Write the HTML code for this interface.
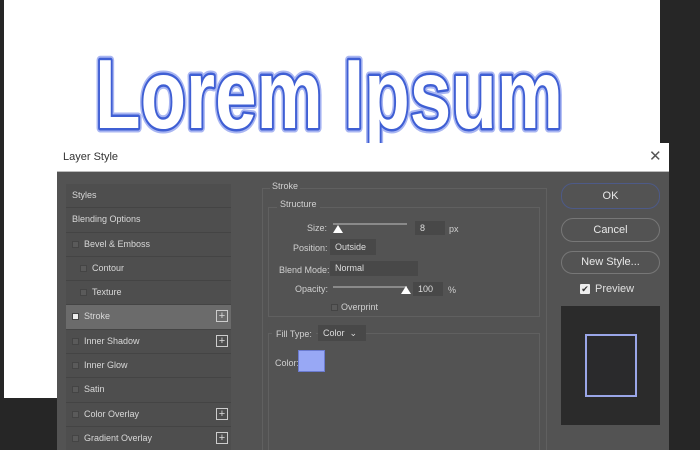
<!DOCTYPE html>
<html><head><style>
*{margin:0;padding:0;box-sizing:border-box}
html,body{width:700px;height:450px;overflow:hidden}
body{background:#262626;position:relative;font-family:"Liberation Sans",sans-serif;}
.abs{position:absolute}
#canvas{left:4px;top:0;width:656px;height:398px;background:#fff}
#dlg{left:57px;top:143px;width:612px;height:307px;background:#535353;overflow:hidden}
#title{left:0;top:0;width:612px;height:29px;background:#fff;border-bottom:1px solid #bbb}
#title span{position:absolute;left:6px;top:8px;font-size:11px;color:#333}
#title b{position:absolute;left:592px;top:4px;font-size:15px;font-weight:normal;color:#555}
.list{left:9px;top:41px;width:165px}
.row{height:24.3px;background:#4e4e4e;border-bottom:1px solid #444;color:#d8d8d8;font-size:9px;line-height:23px;padding-left:6px;position:relative}
.row.sel{background:#6b6b6b}
.cb{display:inline-block;width:7px;height:7px;border:1px solid #444;background:#5a5a5a;margin-right:5px;vertical-align:-1px}
.plus{position:absolute;right:3px;top:5px;width:12px;height:12px;border:1px solid #ccc;color:#ddd;font-size:11px;line-height:10px;text-align:center}
.lbl{color:#d0d0d0;font-size:9px;position:absolute}
.box{border:1px solid #606060;position:absolute}
.field{background:#484848;position:absolute;color:#ddd;font-size:9px;line-height:17px;padding-left:5px}
.btn{position:absolute;left:504px;width:99px;border:1px solid #777;border-radius:12px;color:#e8e8e8;font-size:11px;text-align:center}
.track{position:absolute;height:2px;background:#8a8a8a}
.thumb{position:absolute;width:0;height:0;border-left:5px solid transparent;border-right:5px solid transparent;border-bottom:8px solid #fff}
</style></head><body>
<div id="canvas" class="abs"></div>
<svg class="abs" style="left:0;top:0" width="700" height="160">
 <text x="95" y="128" textLength="468" lengthAdjust="spacingAndGlyphs" font-family="Liberation Sans, DejaVu Sans, sans-serif" font-weight="bold" font-size="98" fill="#fff" stroke="#a9b6f2" stroke-width="9" stroke-linejoin="round">Lorem Ipsum</text>
 <text x="95" y="128" textLength="468" lengthAdjust="spacingAndGlyphs" font-family="Liberation Sans, DejaVu Sans, sans-serif" font-weight="bold" font-size="98" fill="#fff" stroke="#3f5fd4" stroke-width="5" stroke-linejoin="round">Lorem Ipsum</text>
 <text x="95" y="128" textLength="468" lengthAdjust="spacingAndGlyphs" font-family="Liberation Sans, DejaVu Sans, sans-serif" font-weight="bold" font-size="98" fill="#fff">Lorem Ipsum</text>
</svg>
<div id="dlg" class="abs">
 <div id="title" class="abs"><span>Layer Style</span><b>✕</b></div>
 <div class="list abs">
  <div class="row">Styles</div>
  <div class="row">Blending Options</div>
  <div class="row"><span class="cb"></span>Bevel &amp; Emboss</div>
  <div class="row" style="padding-left:14px"><span class="cb"></span>Contour</div>
  <div class="row" style="padding-left:14px"><span class="cb"></span>Texture</div>
  <div class="row sel"><span class="cb" style="background:#eee"></span>Stroke<span class="plus">+</span></div>
  <div class="row"><span class="cb"></span>Inner Shadow<span class="plus">+</span></div>
  <div class="row"><span class="cb"></span>Inner Glow</div>
  <div class="row"><span class="cb"></span>Satin</div>
  <div class="row"><span class="cb"></span>Color Overlay<span class="plus">+</span></div>
  <div class="row"><span class="cb"></span>Gradient Overlay<span class="plus">+</span></div>
 </div>
 <div class="box" style="left:205px;top:45px;width:285px;height:270px"></div>
 <div class="lbl" style="left:213px;top:38px;background:#535353;padding:0 2px">Stroke</div>
 <div class="box" style="left:211px;top:64px;width:272px;height:110px"></div>
 <div class="lbl" style="left:220px;top:56px;background:#535353;padding:0 3px">Structure</div>
 <div class="lbl" style="left:250px;top:80px">Size:</div>
 <div class="track" style="left:276px;top:80px;width:74px"></div>
 <div class="thumb" style="left:276px;top:82px"></div>
 <div class="field" style="left:358px;top:78px;width:30px;height:14px;line-height:14px">8</div>
 <div class="lbl" style="left:392px;top:81px">px</div>
 <div class="lbl" style="left:236px;top:100px">Position:</div>
 <div class="field" style="left:273px;top:96px;width:46px;height:16px;line-height:16px">Outside ⌄</div>
 <div class="lbl" style="left:222px;top:122px">Blend Mode:</div>
 <div class="field" style="left:273px;top:118px;width:88px;height:15px;line-height:15px">Normal</div>
 <div class="lbl" style="left:238px;top:141px">Opacity:</div>
 <div class="track" style="left:276px;top:143px;width:74px"></div>
 <div class="thumb" style="left:344px;top:143px"></div>
 <div class="field" style="left:356px;top:139px;width:30px;height:14px;line-height:14px">100</div>
 <div class="lbl" style="left:391px;top:142px">%</div>
 <div class="lbl" style="left:274px;top:159px"><span class="cb" style="margin-right:3px"></span>Overprint</div>
 <div class="box" style="left:211px;top:190px;width:272px;height:130px"></div>
 <div class="lbl" style="left:215px;top:184px;background:#535353;padding:0 4px;line-height:14px">Fill Type:</div>
 <div class="field" style="left:261px;top:182px;width:48px;height:16px;line-height:16px">Color &nbsp;⌄</div>
 <div class="lbl" style="left:218px;top:215px">Color:</div>
 <div class="abs" style="left:241px;top:207px;width:27px;height:22px;background:#98a8f5;border:1px solid #6b7bd0"></div>
 <div class="btn" style="top:40px;height:26px;line-height:24px;border-color:#4d5a88">OK</div>
 <div class="btn" style="top:75px;height:24px;line-height:22px">Cancel</div>
 <div class="btn" style="top:108px;height:23px;line-height:21px">New Style...</div>
 <div class="abs" style="left:523px;top:141px;width:10px;height:10px;background:#eee;border-radius:1px;color:#333;font-size:9px;line-height:10px;text-align:center">✔</div>
 <div class="lbl" style="left:538px;top:140px;font-size:11px;color:#e0e0e0">Preview</div>
 <div class="abs" style="left:504px;top:163px;width:99px;height:119px;background:#2b2b2b"></div>
 <div class="abs" style="left:528px;top:191px;width:52px;height:63px;border:2px solid #9aa6e8;background:#2a2a2c"></div>
</div>
</body></html>
